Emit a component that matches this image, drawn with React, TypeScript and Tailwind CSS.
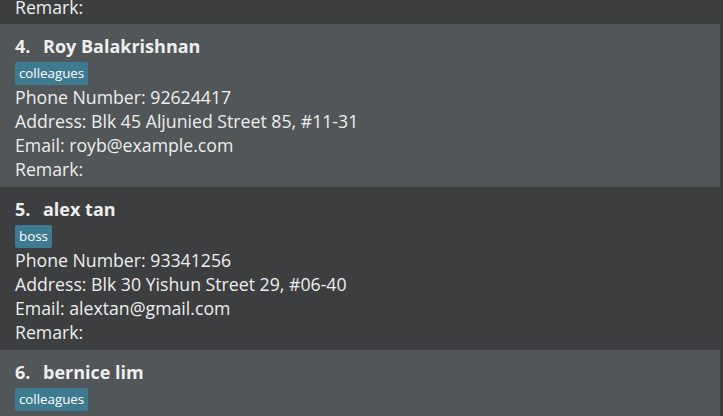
import React from 'react';

interface Person {
  index: number;
  name: string;
  tags: string[];
  phone: string;
  address: string;
  email: string;
}

const PEOPLE: Person[] = [
  {
    index: 4,
    name: 'Roy Balakrishnan',
    tags: ['colleagues'],
    phone: '92624417',
    address: 'Blk 45 Aljunied Street 85, #11-31',
    email: 'royb@example.com',
  },
  {
    index: 5,
    name: 'alex tan',
    tags: ['boss'],
    phone: '93341256',
    address: 'Blk 30 Yishun Street 29, #06-40',
    email: 'alextan@gmail.com',
  },
  {
    index: 6,
    name: 'bernice lim',
    tags: ['colleagues'],
    phone: '91031282',
    address: 'Blk 11 Ang Mo Kio Street 74, #11-04',
    email: 'berniceyu@example.com',
  },
];

const PersonCard: React.FC<{ person: Person; light: boolean }> = ({ person, light }) => (
  <div className={`h-[163px] shrink-0 pl-[15px] pt-[10px] ${light ? 'bg-[#515658]' : 'bg-[#3c3e40]'}`}>
    <div className="h-[24px] flex items-center text-[18px] font-bold leading-[24px]">
      <span className="w-[28px]">{person.index}.</span>
      <span>{person.name}</span>
    </div>
    <div className="mt-[4px] flex gap-1">
      {person.tags.map((tag) => (
        <span key={tag} className="h-[23px] px-[4px] rounded-[2px] bg-[#3e7b91] text-[13.3px] leading-[23px] text-white">
          {tag}
        </span>
      ))}
    </div>
    <div className="text-[17.7px] leading-[24px]">
      <p>Phone Number: {person.phone}</p>
      <p>Address: {person.address}</p>
      <p>Email: {person.email}</p>
      <p>Remark:</p>
    </div>
  </div>
);

export default function App() {
  return (
    <div
      className="w-[723px] h-[416px] overflow-hidden flex bg-[#3c3c3c] text-[#eeeeee]"
      style={{ fontFamily: '"Open Sans", "Noto Sans", sans-serif' }}
    >
      <div className="w-[720px] flex flex-col">
        {/* tail of card 3 */}
        <div className="h-[24px] shrink-0 bg-[#3c3e40] pl-[15px] flex items-end">
          <p className="text-[17.7px] leading-[24px] pb-[5px]">Remark:</p>
        </div>
        {PEOPLE.map((p, i) => (
          <PersonCard key={p.index} person={p} light={i % 2 === 0} />
        ))}
      </div>
    </div>
  );
}
